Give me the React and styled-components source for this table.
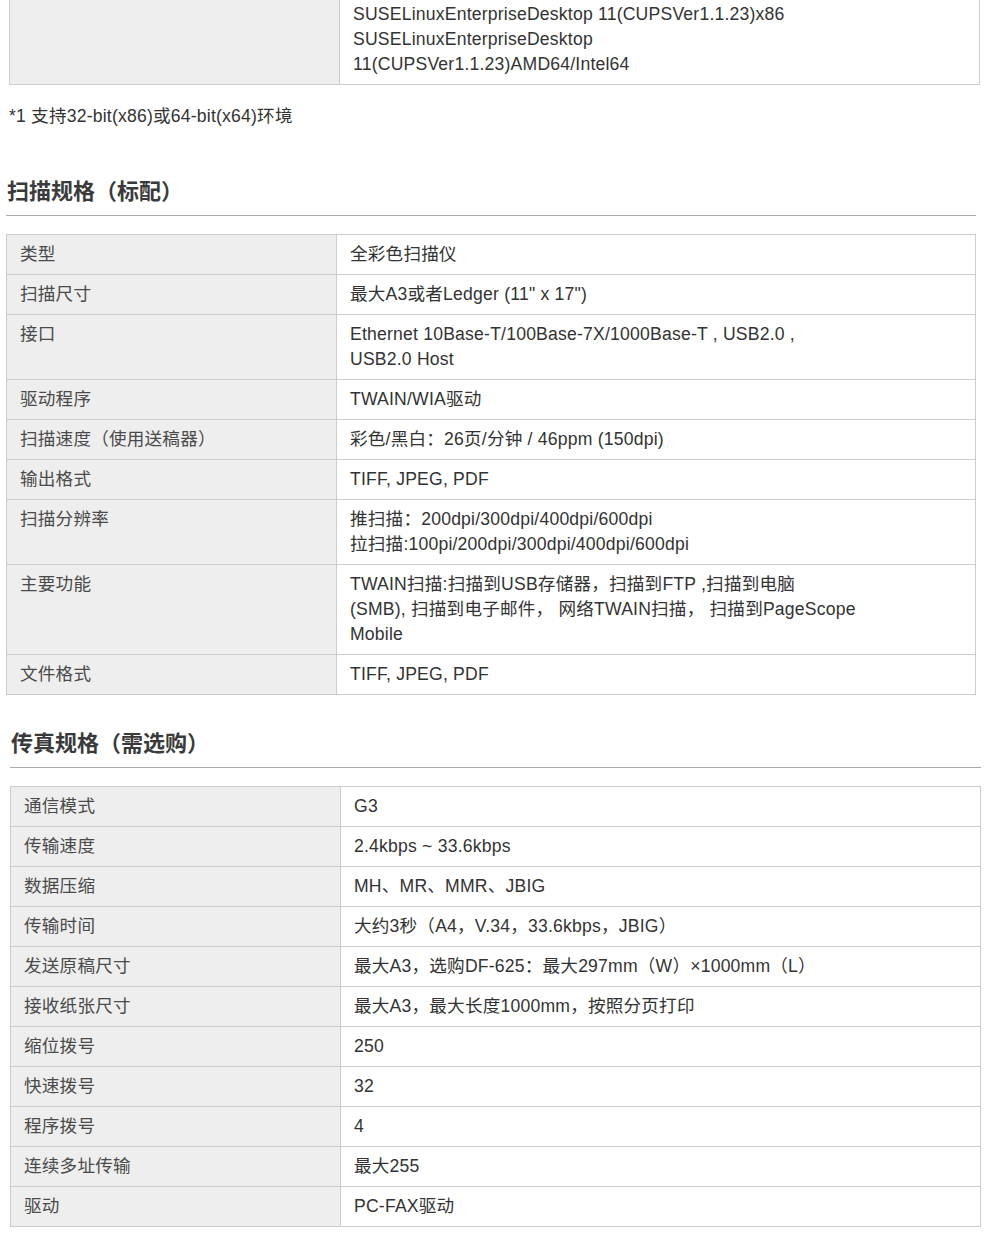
import React from "react";
import styled, { createGlobalStyle } from "styled-components";

const GlobalStyle = createGlobalStyle`
  html, body { margin: 0; padding: 0; background: #fff; }
  body {
    font-family: "Liberation Sans", Arial, "Noto Sans CJK SC", sans-serif;
    color: #333;
  }
`;

const Page = styled.div`
  width: 990px;
  display: flex;
  flex-direction: column;
  padding-bottom: 30px;
`;

const Section = styled.section`
  margin-left: ${(p) => p.$left}px;
  width: ${(p) => p.$width || 971}px;
  margin-top: ${(p) => p.$top || 0}px;
`;

const Heading = styled.h2`
  margin: 0 0 18px 0;
  padding: 0 0 11px 1px;
  font-family: "Noto Sans CJK SC", "Liberation Serif", serif;
  font-size: 22px;
  font-weight: 700;
  line-height: 30px;
  color: #3a3a3a;
  border-bottom: 1px solid #aaa;
`;

const Grid = styled.div`
  display: grid;
  grid-template-columns: 330px 1fr;
  border-top: 1px solid #ccc;
  border-left: 1px solid #ccc;
  margin-top: ${(p) => p.$top || 0}px;
`;

const Cell = styled.div`
  padding: 7px 13px;
  font-size: 17.6px;
  letter-spacing: 0.2px;
  line-height: 25px;
  color: #333;
  border-right: 1px solid #ccc;
  border-bottom: 1px solid #ccc;
  background: ${(p) => (p.$label ? "#eeeeee" : "#ffffff")};
  ${(p) => (p.$label ? "color: #4a4a4a;" : "")}
`;

const Note = styled.p`
  margin: 19px 0 0 9px;
  font-size: 17.6px;
  letter-spacing: 0.2px;
  line-height: 25px;
  color: #333;
`;

const scanRows = [
  ["类型", ["全彩色扫描仪"]],
  ["扫描尺寸", ['最大A3或者Ledger (11" x 17")']],
  ["接口", ["Ethernet 10Base-T/100Base-7X/1000Base-T , USB2.0 ,", "USB2.0 Host"]],
  ["驱动程序", ["TWAIN/WIA驱动"]],
  ["扫描速度（使用送稿器）", ["彩色/黑白：26页/分钟 / 46ppm (150dpi)"]],
  ["输出格式", ["TIFF, JPEG, PDF"]],
  ["扫描分辨率", ["推扫描：200dpi/300dpi/400dpi/600dpi", "拉扫描:100pi/200dpi/300dpi/400dpi/600dpi"]],
  [
    "主要功能",
    [
      "TWAIN扫描:扫描到USB存储器，扫描到FTP ,扫描到电脑",
      "(SMB), 扫描到电子邮件， 网络TWAIN扫描， 扫描到PageScope",
      "Mobile",
    ],
  ],
  ["文件格式", ["TIFF, JPEG, PDF"]],
];

const faxRows = [
  ["通信模式", ["G3"]],
  ["传输速度", ["2.4kbps ~ 33.6kbps"]],
  ["数据压缩", ["MH、MR、MMR、JBIG"]],
  ["传输时间", ["大约3秒（A4，V.34，33.6kbps，JBIG）"]],
  ["发送原稿尺寸", ["最大A3，选购DF-625：最大297mm（W）×1000mm（L）"]],
  ["接收纸张尺寸", ["最大A3，最大长度1000mm，按照分页打印"]],
  ["缩位拨号", ["250"]],
  ["快速拨号", ["32"]],
  ["程序拨号", ["4"]],
  ["连续多址传输", ["最大255"]],
  ["驱动", ["PC-FAX驱动"]],
];

function Lines({ lines }) {
  return lines.map((l, i) => (
    <React.Fragment key={i}>
      {i > 0 && <br />}
      {l}
    </React.Fragment>
  ));
}

function SpecTable({ rows, top }) {
  return (
    <Grid $top={top}>
      {rows.map(([label, value]) => (
        <React.Fragment key={label}>
          <Cell $label>{label}</Cell>
          <Cell>
            <Lines lines={value} />
          </Cell>
        </React.Fragment>
      ))}
    </Grid>
  );
}

export default function App() {
  return (
    <Page>
      <GlobalStyle />
      <Section $left={9} $width={971}>
        <SpecTable
          top={-6}
          rows={[
            [
              "",
              [
                "SUSELinuxEnterpriseDesktop 11(CUPSVer1.1.23)x86",
                "SUSELinuxEnterpriseDesktop",
                "11(CUPSVer1.1.23)AMD64/Intel64",
              ],
            ],
          ]}
        />
      </Section>
      <Note>*1 支持32-bit(x86)或64-bit(x64)环境</Note>
      <Section $left={6} $width={970} $top={45}>
        <Heading>扫描规格（标配）</Heading>
        <SpecTable rows={scanRows} />
      </Section>
      <Section $left={10} $width={971} $top={31}>
        <Heading>传真规格（需选购）</Heading>
        <SpecTable rows={faxRows} />
      </Section>
    </Page>
  );
}
